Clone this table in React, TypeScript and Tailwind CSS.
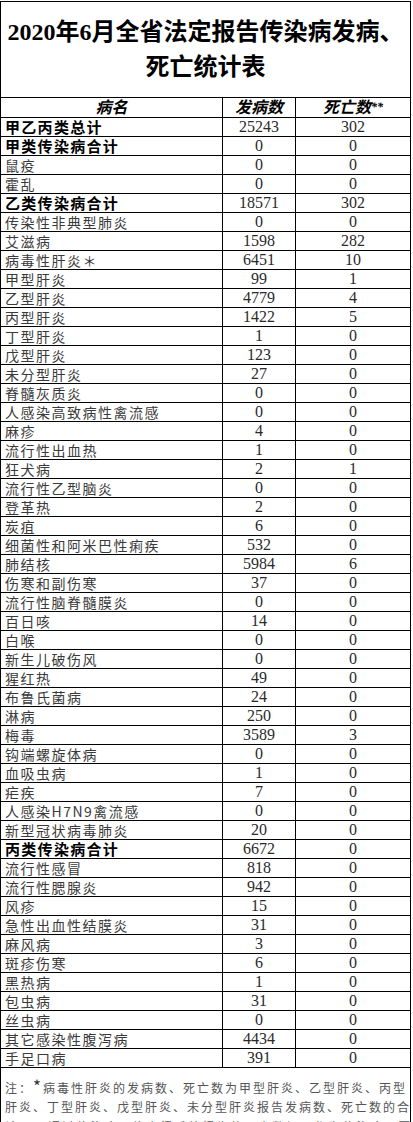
const rows: [string, string, string, boolean?][] = [
  ['甲乙丙类总计', '25243', '302', true],
  ['甲类传染病合计', '0', '0', true],
  ['鼠疫', '0', '0'],
  ['霍乱', '0', '0'],
  ['乙类传染病合计', '18571', '302', true],
  ['传染性非典型肺炎', '0', '0'],
  ['艾滋病', '1598', '282'],
  ['病毒性肝炎＊', '6451', '10'],
  ['甲型肝炎', '99', '1'],
  ['乙型肝炎', '4779', '4'],
  ['丙型肝炎', '1422', '5'],
  ['丁型肝炎', '1', '0'],
  ['戊型肝炎', '123', '0'],
  ['未分型肝炎', '27', '0'],
  ['脊髓灰质炎', '0', '0'],
  ['人感染高致病性禽流感', '0', '0'],
  ['麻疹', '4', '0'],
  ['流行性出血热', '1', '0'],
  ['狂犬病', '2', '1'],
  ['流行性乙型脑炎', '0', '0'],
  ['登革热', '2', '0'],
  ['炭疽', '6', '0'],
  ['细菌性和阿米巴性痢疾', '532', '0'],
  ['肺结核', '5984', '6'],
  ['伤寒和副伤寒', '37', '0'],
  ['流行性脑脊髓膜炎', '0', '0'],
  ['百日咳', '14', '0'],
  ['白喉', '0', '0'],
  ['新生儿破伤风', '0', '0'],
  ['猩红热', '49', '0'],
  ['布鲁氏菌病', '24', '0'],
  ['淋病', '250', '0'],
  ['梅毒', '3589', '3'],
  ['钩端螺旋体病', '0', '0'],
  ['血吸虫病', '1', '0'],
  ['疟疾', '7', '0'],
  ['人感染H7N9禽流感', '0', '0'],
  ['新型冠状病毒肺炎', '20', '0'],
  ['丙类传染病合计', '6672', '0', true],
  ['流行性感冒', '818', '0'],
  ['流行性腮腺炎', '942', '0'],
  ['风疹', '15', '0'],
  ['急性出血性结膜炎', '31', '0'],
  ['麻风病', '3', '0'],
  ['斑疹伤寒', '6', '0'],
  ['黑热病', '1', '0'],
  ['包虫病', '31', '0'],
  ['丝虫病', '0', '0'],
  ['其它感染性腹泻病', '4434', '0'],
  ['手足口病', '391', '0'],
]

const notes = [
  '肝炎、丁型肝炎、戊型肝炎、未分型肝炎报告发病数、死亡数的合',
  '计。**通过传染病网络直报系统报告的死亡数据不作为传染病死因',
]

export default function App() {
  return (
    <div className="w-[413px] h-[1122px] overflow-hidden bg-white text-[#2a2a2a] font-['Liberation_Serif','Noto_Sans_CJK_SC',serif]">
      <div className="mt-[1px] w-[411px] border-l border-r border-t border-black">
        <div className="h-[96px] border-b border-black flex flex-col items-center justify-center font-bold text-[24px] leading-[35px] text-black">
          <div className="whitespace-nowrap">2020年6月全省法定报告传染病发病、</div>
          <div className="whitespace-nowrap">死亡统计表</div>
        </div>

        <div className="grid grid-cols-[222px_73px_114px] h-[20px] border-b border-black text-[16px] leading-[19px] font-semibold italic text-black">
          <div className="border-r border-black text-center">病名</div>
          <div className="border-r border-black text-center">发病数</div>
          <div className="text-center">
            死亡数<span className="text-[12px] align-top">**</span>
          </div>
        </div>

        {rows.map(([name, cases, deaths, bold]) => (
          <div
            key={name}
            className="grid grid-cols-[222px_73px_114px] h-[19px] border-b border-black leading-[18px]"
          >
            <div
              className={
                bold
                  ? "border-r border-black pl-[4px] whitespace-nowrap font-['Noto_Sans_CJK_SC',sans-serif] font-bold text-[15px] tracking-[1.3px] text-black"
                  : "border-r border-black pl-[4px] whitespace-nowrap font-['Noto_Sans_CJK_SC',sans-serif] text-[14px] tracking-[1.5px] text-[#3a3a3a]"
              }
            >
              {name}
            </div>
            <div className="border-r border-black text-center text-[16px]">{cases}</div>
            <div className="text-center text-[16px]">{deaths}</div>
          </div>
        ))}

        <div className="pt-[9px] pl-[4px] h-[80px] font-['Noto_Sans_CJK_SC',sans-serif] text-[12px] leading-[20px] tracking-[2px] text-[#555]">
          <div className="whitespace-nowrap h-[20px]">
            注：<span className="text-[17px] leading-none text-[#333]">*</span>病毒性肝炎的发病数、死亡数为甲型肝炎、乙型肝炎、丙型
          </div>
          {notes.map((line) => (
            <div key={line} className="whitespace-nowrap overflow-hidden">
              {line}
            </div>
          ))}
        </div>
      </div>
    </div>
  )
}
